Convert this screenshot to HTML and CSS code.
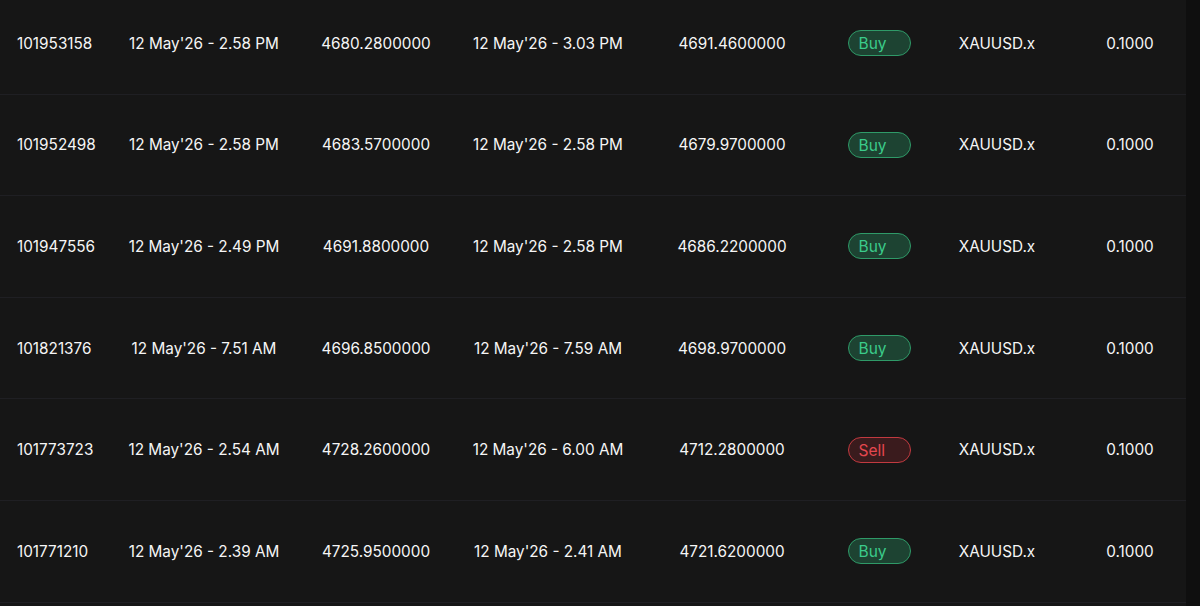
FILE: index.html
```html
<!DOCTYPE html>
<html>
<head>
<meta charset="utf-8">
<link rel="stylesheet" href="styles.css">
</head>
<body>
<div class="page">
  <div class="table">
    <div class="row">
      <div class="cell c-id">101953158</div>
      <div class="cell c-date">12 May'26 - 2.58 PM</div>
      <div class="cell c-price">4680.2800000</div>
      <div class="cell c-date2">12 May'26 - 3.03 PM</div>
      <div class="cell c-price2">4691.4600000</div>
      <div class="cell c-type"><span class="badge buy">Buy</span></div>
      <div class="cell c-sym">XAUUSD.x</div>
      <div class="cell c-qty">0.1000</div>
    </div>
    <div class="row">
      <div class="cell c-id">101952498</div>
      <div class="cell c-date">12 May'26 - 2.58 PM</div>
      <div class="cell c-price">4683.5700000</div>
      <div class="cell c-date2">12 May'26 - 2.58 PM</div>
      <div class="cell c-price2">4679.9700000</div>
      <div class="cell c-type"><span class="badge buy">Buy</span></div>
      <div class="cell c-sym">XAUUSD.x</div>
      <div class="cell c-qty">0.1000</div>
    </div>
    <div class="row">
      <div class="cell c-id">101947556</div>
      <div class="cell c-date">12 May'26 - 2.49 PM</div>
      <div class="cell c-price">4691.8800000</div>
      <div class="cell c-date2">12 May'26 - 2.58 PM</div>
      <div class="cell c-price2">4686.2200000</div>
      <div class="cell c-type"><span class="badge buy">Buy</span></div>
      <div class="cell c-sym">XAUUSD.x</div>
      <div class="cell c-qty">0.1000</div>
    </div>
    <div class="row">
      <div class="cell c-id">101821376</div>
      <div class="cell c-date">12 May'26 - 7.51 AM</div>
      <div class="cell c-price">4696.8500000</div>
      <div class="cell c-date2">12 May'26 - 7.59 AM</div>
      <div class="cell c-price2">4698.9700000</div>
      <div class="cell c-type"><span class="badge buy">Buy</span></div>
      <div class="cell c-sym">XAUUSD.x</div>
      <div class="cell c-qty">0.1000</div>
    </div>
    <div class="row">
      <div class="cell c-id">101773723</div>
      <div class="cell c-date">12 May'26 - 2.54 AM</div>
      <div class="cell c-price">4728.2600000</div>
      <div class="cell c-date2">12 May'26 - 6.00 AM</div>
      <div class="cell c-price2">4712.2800000</div>
      <div class="cell c-type"><span class="badge sell">Sell</span></div>
      <div class="cell c-sym">XAUUSD.x</div>
      <div class="cell c-qty">0.1000</div>
    </div>
    <div class="row">
      <div class="cell c-id">101771210</div>
      <div class="cell c-date">12 May'26 - 2.39 AM</div>
      <div class="cell c-price">4725.9500000</div>
      <div class="cell c-date2">12 May'26 - 2.41 AM</div>
      <div class="cell c-price2">4721.6200000</div>
      <div class="cell c-type"><span class="badge buy">Buy</span></div>
      <div class="cell c-sym">XAUUSD.x</div>
      <div class="cell c-qty">0.1000</div>
    </div>
  </div>
  <div class="scrollbar"></div>
</div>
</body>
</html>
```

FILE: styles.css
```css
html, body {
  margin: 0;
  padding: 0;
  background: #161616;
  overflow: hidden;
}
.page {
  display: flex;
  width: 1200px;
  height: 606px;
  overflow: hidden;
  font-family: Inter, "Noto Sans", sans-serif;
  font-size: 15.3px;
  color: #f5f5f5;
}
.table {
  width: 1186px;
  margin-top: -7px;
  display: flex;
  flex-direction: column;
}
.row {
  display: grid;
  grid-template-columns: 108px 192px 152px 192px 176px 118px 118px 130px;
  height: 100.6px;
  border-bottom: 1px solid #1f1f23;
  align-items: center;
  flex-shrink: 0;
}
.cell {
  text-align: center;
  white-space: nowrap;
}
.c-id {
  text-align: left;
  padding-left: 17px;
}
.c-qty {
  padding-left: 18px;
}
.c-type {
  display: flex;
  justify-content: center;
}
.badge {
  box-sizing: border-box;
  width: 63px;
  height: 26px;
  border-radius: 13px;
  padding-left: 10px;
  text-align: left;
  line-height: 25px;
  font-size: 15.5px;
}
.buy {
  background: #1d4332;
  border: 1px solid #2f9a68;
  color: #3bcb8a;
}
.sell {
  background: #3a1b1d;
  border: 1px solid #c23a40;
  color: #e5474f;
}
.scrollbar {
  flex: 1;
  background: #0f0f0f;
}
```
